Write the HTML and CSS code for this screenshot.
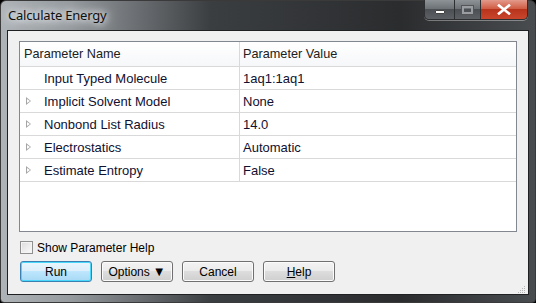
FILE: index.html
```html
<!DOCTYPE html>
<html>
<head>
<meta charset="utf-8">
<link rel="stylesheet" href="styles.css">
</head>
<body>
<div class="window">
  <div class="titlebar">
    <div class="title">Calculate Energy</div>
    <div class="caption">
      <div class="cbtn min"><span class="min-bar"></span></div>
      <div class="cbtn max"><span class="max-box"></span></div>
      <div class="cbtn close">
        <svg width="14" height="11" viewBox="0 0 14 11"><path d="M2 1.5 L12 9.5 M12 1.5 L2 9.5" stroke="#fff" stroke-width="2.6" stroke-linecap="square"/></svg>
      </div>
    </div>
  </div>
  <div class="client">
    <div class="table">
      <div class="row head">
        <div class="cell name">Parameter Name</div>
        <div class="cell value">Parameter Value</div>
      </div>
      <div class="row">
        <div class="cell name"><span class="arrow none"></span>Input Typed Molecule</div>
        <div class="cell value">1aq1:1aq1</div>
      </div>
      <div class="row">
        <div class="cell name"><span class="arrow"></span>Implicit Solvent Model</div>
        <div class="cell value">None</div>
      </div>
      <div class="row">
        <div class="cell name"><span class="arrow"></span>Nonbond List Radius</div>
        <div class="cell value">14.0</div>
      </div>
      <div class="row">
        <div class="cell name"><span class="arrow"></span>Electrostatics</div>
        <div class="cell value">Automatic</div>
      </div>
      <div class="row">
        <div class="cell name"><span class="arrow"></span>Estimate Entropy</div>
        <div class="cell value">False</div>
      </div>
    </div>
    <label class="check"><span class="box"></span>Show Parameter Help</label>
    <div class="buttons">
      <div class="btn default">Run</div>
      <div class="btn">Options <span class="tri">▼</span></div>
      <div class="btn">Cancel</div>
      <div class="btn"><u>H</u>elp</div>
    </div>
    <div class="grip">
      <svg width="9" height="9" viewBox="0 0 9 9" fill="#b5b5b5"><rect x="7" y="1" width="1" height="1"/><rect x="5" y="3" width="1" height="1"/><rect x="7" y="3" width="1" height="1"/><rect x="3" y="5" width="1" height="1"/><rect x="5" y="5" width="1" height="1"/><rect x="7" y="5" width="1" height="1"/><rect x="1" y="7" width="1" height="1"/><rect x="3" y="7" width="1" height="1"/><rect x="5" y="7" width="1" height="1"/><rect x="7" y="7" width="1" height="1"/></svg>
    </div>
  </div>
</div>
</body>
</html>
```
FILE: styles.css
```css
* { box-sizing: border-box; }
html, body { margin: 0; padding: 0; }
body { width: 536px; height: 303px; overflow: hidden; background: #000; }

.window {
  width: 536px;
  height: 303px;
  border-radius: 6px 6px 4px 4px;
  border: 1px solid #3a3a3a;
  background: linear-gradient(90deg, #aeb3b7 0px, #959a9e 70px, #3b3e41 210px, #2a2c2e 400px, #4a4d50 536px);
  padding: 0 6px 7px 6px;
  display: flex;
  flex-direction: column;
  position: relative;
}

.titlebar {
  height: 29px;
  display: flex;
  align-items: flex-start;
  position: relative;
}
.title {
  font-family: "Noto Sans", "Liberation Sans", sans-serif;
  font-size: 13px;
  color: #101010;
  padding: 5px 0 0 1px;
  letter-spacing: -0.2px;
  text-shadow: 0 0 6px #e8ecef, 0 0 10px #e8ecef, 0 0 14px #dfe3e6;
}
.caption {
  margin-left: auto;
  margin-top: -1px;
  margin-right: 1px;
  display: flex;
  height: 20px;
  border: 1px solid #2d2f31;
  border-top: none;
  border-radius: 0 0 5px 5px;
  overflow: hidden;
  box-shadow: 0 1px 0 rgba(255,255,255,0.35);
}
.cbtn {
  height: 19px;
  display: flex;
  align-items: center;
  justify-content: center;
  border-left: 1px solid #2d2f31;
  background: linear-gradient(180deg, #8e9397 0%, #6d7276 45%, #4c5054 50%, #5d6165 100%);
}
.cbtn.min { width: 29px; border-left: none; }
.cbtn.max { width: 26px; }
.cbtn.close { width: 47px; background: linear-gradient(180deg, #e39a8b 0%, #d05d45 45%, #b8341c 50%, #c9462c 100%); }
.min-bar { width: 10px; height: 4px; background: #fff; margin-top: 5px; border: 1px solid #444; border-radius: 1px; }
.max-box { width: 11px; height: 8px; border: 2px solid #9a9ea2; outline: 1px solid #555; }

.client {
  flex: 1;
  background: #f0f0f0;
  border: 1px solid #1f2022;
  padding: 10px 11px 0 11px;
  display: flex;
  flex-direction: column;
  position: relative;
}

.table {
  height: 191px;
  background: #fff;
  border: 1px solid #828790;
  font-family: "Liberation Sans", sans-serif;
  font-size: 13px;
  color: #101030;
}
.row {
  display: flex;
  height: 23px;
  border-bottom: 1px solid #d9d9d9;
}
.row.head {
  height: 25px;
  background: linear-gradient(180deg, #ffffff, #f6f7f9);
  border-bottom: 1px solid #d9d9d9;
  color: #202020;
  font-size: 12.7px;
}
.cell {
  display: flex;
  align-items: center;
  white-space: nowrap;
}
.cell.name {
  width: 220px;
  border-right: 1px solid #d9d9d9;
  padding-left: 4px;
}
.cell.value { flex: 1; padding-left: 3px; }
.row:not(.head) .cell.name { padding-left: 6px; }
.arrow {
  width: 0; height: 0;
  margin-right: 13px;
  border-left: 5px solid #a6a6a6;
  border-top: 4px solid transparent;
  border-bottom: 4px solid transparent;
  position: relative;
}
.arrow::after {
  content: "";
  position: absolute;
  left: -4px; top: -2px;
  border-left: 3px solid #fff;
  border-top: 2px solid transparent;
  border-bottom: 2px solid transparent;
}
.arrow.none { visibility: hidden; }

.check {
  display: flex;
  align-items: center;
  margin-top: 9px;
  height: 13px;
  font-family: "Liberation Sans", sans-serif;
  font-size: 12px;
  color: #000;
}
.box {
  width: 13px; height: 13px;
  border: 1px solid #8e8f8f;
  background: linear-gradient(135deg, #dcdcdc, #fbfbfb);
  box-shadow: inset 0 0 0 1px #f4f4f4;
  margin: 0 4px 0 1px;
}

.buttons {
  display: flex;
  gap: 9px;
  margin-top: 7px;
  padding-left: 1px;
}
.btn {
  width: 72px;
  height: 21px;
  border: 1px solid #707070;
  border-radius: 3px;
  background: linear-gradient(180deg, #f3f3f3 0%, #ebebeb 49%, #dddddd 50%, #cfcfcf 100%);
  box-shadow: inset 0 0 0 1px #fbfbfb;
  display: flex;
  align-items: center;
  justify-content: center;
  font-family: "Liberation Sans", sans-serif;
  font-size: 12px;
  color: #000;
}
.tri { font-size: 13px; margin-left: 3px; }
.btn.default {
  border-color: #3c7fb1;
  background: linear-gradient(180deg, #e9f5fc 0%, #dbeffa 49%, #bee6fd 50%, #a7d9f5 100%);
  box-shadow: inset 0 0 0 1px #48d8fb;
}
.btn u { text-decoration: underline; }

.grip {
  position: absolute;
  right: 2px;
  bottom: 0px;
  line-height: 0;
}
```
